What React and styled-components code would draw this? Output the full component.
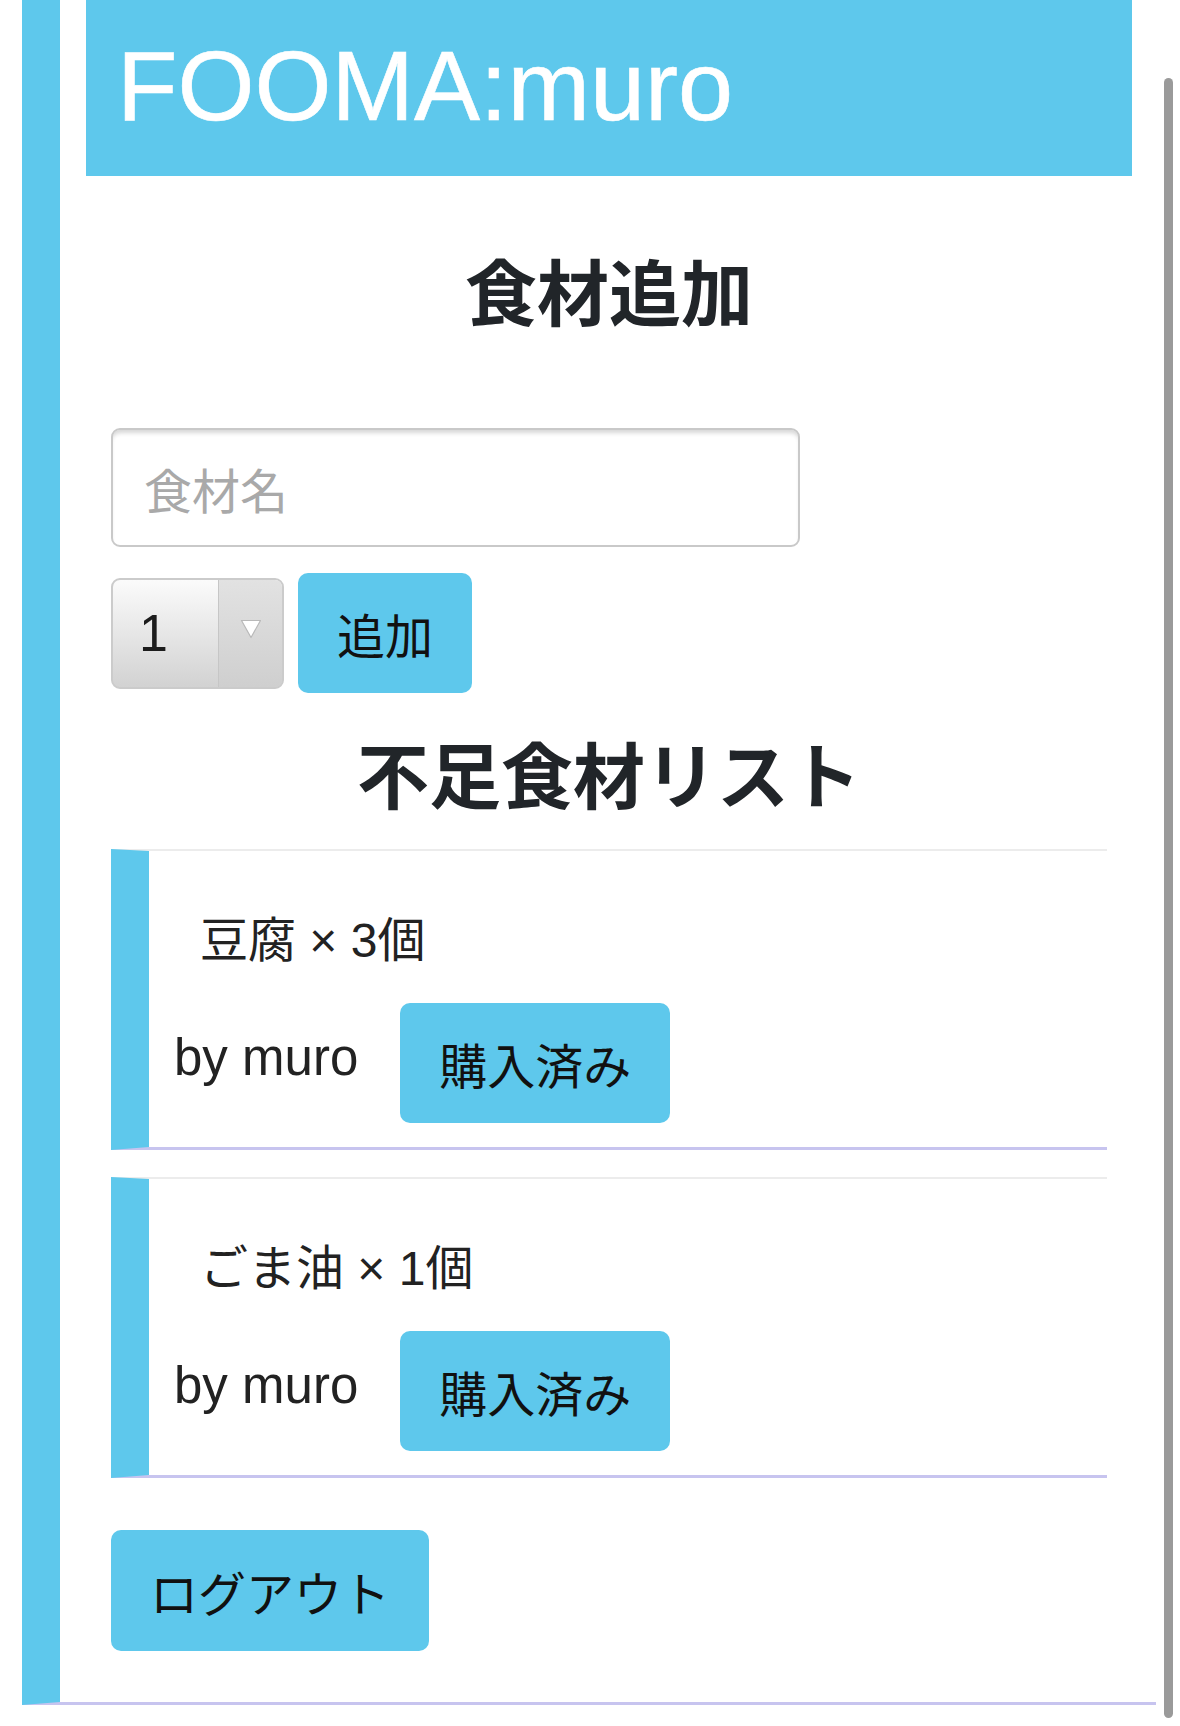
import React from "react";
import styled, { createGlobalStyle } from "styled-components";

const BLUE = "#5ec8ec";
const LAVENDER = "#c7c4ef";
const LATIN = `"Liberation Sans", "Noto Sans CJK JP", sans-serif`;
const JP = `"Noto Sans CJK JP", "Liberation Sans", sans-serif`;

const GlobalStyle = createGlobalStyle`
  html, body { margin: 0; padding: 0; background: #fff; }
  body { font-family: ${LATIN}; color: #222; }
  *, *::before, *::after { box-sizing: border-box; }
`;

const Frame = styled.div`
  margin-left: 22px;
  width: 1134px;
  border-left: 38px solid ${BLUE};
  border-bottom: 3px solid ${LAVENDER};
  padding-bottom: 51px;
`;

const Header = styled.header`
  margin: 0 24px 0 26px;
  height: 176px;
  background: ${BLUE};
  padding: 36px 0 0 31px;
`;

const Logo = styled.h1`
  margin: 0;
  font-family: ${LATIN};
  font-weight: 400;
  font-size: 99px;
  line-height: 1;
  color: #fff;
  -webkit-text-stroke: 0.6px #fff;
`;

const Main = styled.main`
  padding: 0 49px 0 51px;
`;

const Title = styled.h2`
  margin: ${(p) => p.$top}px 0 ${(p) => p.$bottom}px;
  text-align: center;
  font-family: ${JP};
  font-weight: 700;
  font-size: 72px;
  line-height: 1;
  color: #212529;
`;

const NameInput = styled.input`
  display: block;
  width: 689px;
  height: 119px;
  margin: 0;
  border: 2px solid #c9c9c9;
  border-radius: 9px;
  box-shadow: inset 0 5px 4px -2px rgba(0, 0, 0, 0.16);
  padding: 0 31px;
  font-family: ${JP};
  font-size: 48px;
  color: #222;
  background: #fff;
  outline: none;
  &::placeholder {
    color: #a9a9a9;
  }
`;

const AddRow = styled.div`
  display: flex;
  align-items: center;
  gap: 14px;
  margin-top: 26px;
`;

const SelectBox = styled.div`
  display: flex;
  width: 173px;
  height: 111px;
  border: 2px solid #cbcbcb;
  border-radius: 9px;
  overflow: hidden;
  background: linear-gradient(#fbfbfb, #d2d2d2);
`;

const SelectValue = styled.div`
  flex: 1;
  display: flex;
  align-items: center;
  padding-left: 26px;
  font-family: ${LATIN};
  font-size: 52px;
  color: #1c1c1c;
`;

const ArrowPart = styled.div`
  width: 64px;
  display: flex;
  align-items: center;
  justify-content: center;
  padding-bottom: 9px;
  border-left: 1px solid #c6c6c6;
  background: linear-gradient(#e2e2e2, #cfcfcf);
`;

const Button = styled.button`
  height: ${(p) => p.$h || 120}px;
  padding: 0 39px;
  border: none;
  border-radius: 10px;
  background: ${BLUE};
  font-family: ${JP};
  font-size: 48px;
  color: #111;
  white-space: nowrap;
`;

const List = styled.div`
  display: flex;
  flex-direction: column;
  gap: 27px;
`;

const ItemCard = styled.div`
  width: 996px;
  border-left: 38px solid ${BLUE};
  border-top: 2px solid #ececec;
  border-bottom: 3px solid ${LAVENDER};
  padding: 61px 0 24px;
`;

const ItemName = styled.p`
  margin: 0 0 33px;
  padding-left: 51px;
  font-family: ${LATIN};
  font-size: 48px;
  line-height: 58px;
  color: #222;
`;

const ItemRow = styled.div`
  display: flex;
  align-items: center;
  gap: 42px;
  padding-left: 25px;
`;

const Owner = styled.span`
  font-family: ${LATIN};
  font-size: 51px;
  margin-bottom: 12px;
  color: #222;
`;

const LogoutWrap = styled.div`
  margin-top: 52px;
`;

const ScrollIndicator = styled.div`
  position: fixed;
  top: 78px;
  right: 7px;
  width: 9px;
  height: 1640px;
  border-radius: 5px;
  background: #9a9a9a;
`;

const items = [
  { name: "豆腐", count: 3, owner: "muro" },
  { name: "ごま油", count: 1, owner: "muro" },
];

export default function App() {
  return (
    <>
      <GlobalStyle />
      <Frame>
        <Header>
          <Logo>FOOMA:muro</Logo>
        </Header>
        <Main>
          <Title $top={77} $bottom={103}>食材追加</Title>
          <NameInput placeholder="食材名" />
          <AddRow>
            <SelectBox>
              <SelectValue>1</SelectValue>
              <ArrowPart>
                <svg width="22" height="20" viewBox="0 0 22 20">
                  <path d="M1.5 1.5 L20.5 1.5 L11 18.5 Z" fill="#fff" stroke="#b9b9b9" strokeWidth="1.2" strokeLinejoin="round" />
                </svg>
              </ArrowPart>
            </SelectBox>
            <Button>追加</Button>
          </AddRow>
          <Title $top={43} $bottom={41}>不足食材リスト</Title>
          <List>
            {items.map((it) => (
              <ItemCard key={it.name}>
                <ItemName>
                  {it.name} × {it.count}個
                </ItemName>
                <ItemRow>
                  <Owner>by {it.owner}</Owner>
                  <Button>購入済み</Button>
                </ItemRow>
              </ItemCard>
            ))}
          </List>
          <LogoutWrap>
            <Button $h={121}>ログアウト</Button>
          </LogoutWrap>
        </Main>
      </Frame>
      <ScrollIndicator />
    </>
  );
}
